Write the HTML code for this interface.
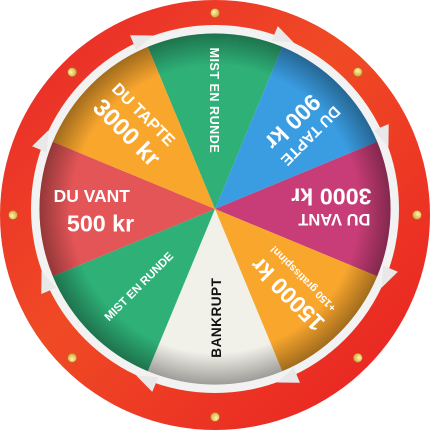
<!DOCTYPE html>
<html><head><meta charset="utf-8"><style>
html,body{margin:0;padding:0;background:#fff;width:430px;height:430px;overflow:hidden}
svg{display:block}
text{font-family:"Liberation Sans",sans-serif;font-weight:bold}
</style></head><body>
<svg width="430" height="430" viewBox="0 0 430 430">
<defs>
<linearGradient id="rim" x1="0" y1="0" x2="1" y2="1">
<stop offset="0" stop-color="#e8262a"/><stop offset="0.45" stop-color="#f04a25"/><stop offset="1" stop-color="#e81e22"/>
</linearGradient>
<radialGradient id="shade" cx="215" cy="215" r="181" gradientUnits="userSpaceOnUse">
<stop offset="0.82" stop-color="#000" stop-opacity="0"/><stop offset="1" stop-color="#000" stop-opacity="0.35"/>
</radialGradient>
<radialGradient id="bolt" cx="0.4" cy="0.4" r="0.6">
<stop offset="0" stop-color="#fff6b0"/><stop offset="1" stop-color="#d8a83a"/>
</radialGradient>
</defs>
<circle cx="215" cy="215" r="215" fill="url(#rim)"/>
<circle cx="215" cy="209" r="184" fill="#f2f2f2"/>
<g transform="translate(215 209) scale(0.97) translate(-215 -215)">
<path d="M215 215 L145.7 47.8 A181 181 0 0 1 284.3 47.8Z" fill="#2eb077"/>
<path d="M215 215 L284.3 47.8 A181 181 0 0 1 382.2 145.7Z" fill="#3a9de2"/>
<path d="M215 215 L382.2 145.7 A181 181 0 0 1 382.2 284.3Z" fill="#c83d77"/>
<path d="M215 215 L382.2 284.3 A181 181 0 0 1 284.3 382.2Z" fill="#f9a62d"/>
<path d="M215 215 L284.3 382.2 A181 181 0 0 1 145.7 382.2Z" fill="#f2f1e9"/>
<path d="M215 215 L145.7 382.2 A181 181 0 0 1 47.8 284.3Z" fill="#2eb077"/>
<path d="M215 215 L47.8 284.3 A181 181 0 0 1 47.8 145.7Z" fill="#e45557"/>
<path d="M215 215 L47.8 145.7 A181 181 0 0 1 145.7 47.8Z" fill="#f9a62d"/>
<circle cx="215" cy="215" r="181" fill="url(#shade)"/>
<g fill="#fff">
<g transform="rotate(90 215 215)"><text x="103" y="220" font-size="13" text-anchor="middle" letter-spacing="0.5">MIST EN RUNDE</text></g>
<g transform="rotate(135 215 215)"><text x="92" y="204" font-size="16" text-anchor="middle">DU TAPTE</text><text x="95" y="230" font-size="24" text-anchor="middle">900 kr</text></g>
<g transform="rotate(180 215 215)"><text x="92" y="210" font-size="17" text-anchor="middle">DU VANT</text><text x="95" y="236" font-size="24" text-anchor="middle">3000 kr</text></g>
<g transform="rotate(225 215 215)"><text x="100" y="214" font-size="24" text-anchor="middle">15000 kr</text><text x="100" y="232" font-size="11" text-anchor="middle">+150 gratisspinn!</text></g>
<g transform="rotate(270 215 215)"><text x="103" y="221" font-size="14" text-anchor="middle" fill="#111" letter-spacing="0.5">BANKRUPT</text></g>
<g transform="rotate(315 215 215)"><text x="103" y="220" font-size="12" text-anchor="middle">MIST EN RUNDE</text></g>
<g><text x="88" y="208" font-size="18" text-anchor="middle">DU VANT</text><text x="97" y="238" font-size="24" text-anchor="middle">500 kr</text></g>
<g transform="rotate(45 215 215)"><text x="94" y="204" font-size="17" text-anchor="middle">DU TAPTE</text><text x="95" y="232" font-size="25" text-anchor="middle">3000 kr</text></g>
</g>
</g>
<g fill="#e8e8e8" transform="translate(0 -6)">
<g transform="rotate(22.5 215 215)"><path d="M203 22 L224 31 L203 38Z"/></g>
<g transform="rotate(67.5 215 215)"><path d="M203 22 L224 31 L203 38Z"/></g>
<g transform="rotate(112.5 215 215)"><path d="M203 22 L224 31 L203 38Z"/></g>
<g transform="rotate(157.5 215 215)"><path d="M203 22 L224 31 L203 38Z"/></g>
<g transform="rotate(202.5 215 215)"><path d="M203 22 L224 31 L203 38Z"/></g>
<g transform="rotate(247.5 215 215)"><path d="M203 22 L224 31 L203 38Z"/></g>
<g transform="rotate(292.5 215 215)"><path d="M203 22 L224 31 L203 38Z"/></g>
<g transform="rotate(337.5 215 215)"><path d="M203 22 L224 31 L203 38Z"/></g>
</g>
<g fill="url(#bolt)" stroke="#b07a20" stroke-width="0.6">
<circle cx="215" cy="13" r="4.5"/>
<circle cx="215" cy="13" r="4.5" transform="rotate(45 215 215)"/>
<circle cx="215" cy="13" r="4.5" transform="rotate(90 215 215)"/>
<circle cx="215" cy="13" r="4.5" transform="rotate(135 215 215)"/>
<circle cx="215" cy="13" r="4.5" transform="rotate(180 215 215)"/>
<circle cx="215" cy="13" r="4.5" transform="rotate(225 215 215)"/>
<circle cx="215" cy="13" r="4.5" transform="rotate(270 215 215)"/>
<circle cx="215" cy="13" r="4.5" transform="rotate(315 215 215)"/>
</g>
</svg>
</body></html>
